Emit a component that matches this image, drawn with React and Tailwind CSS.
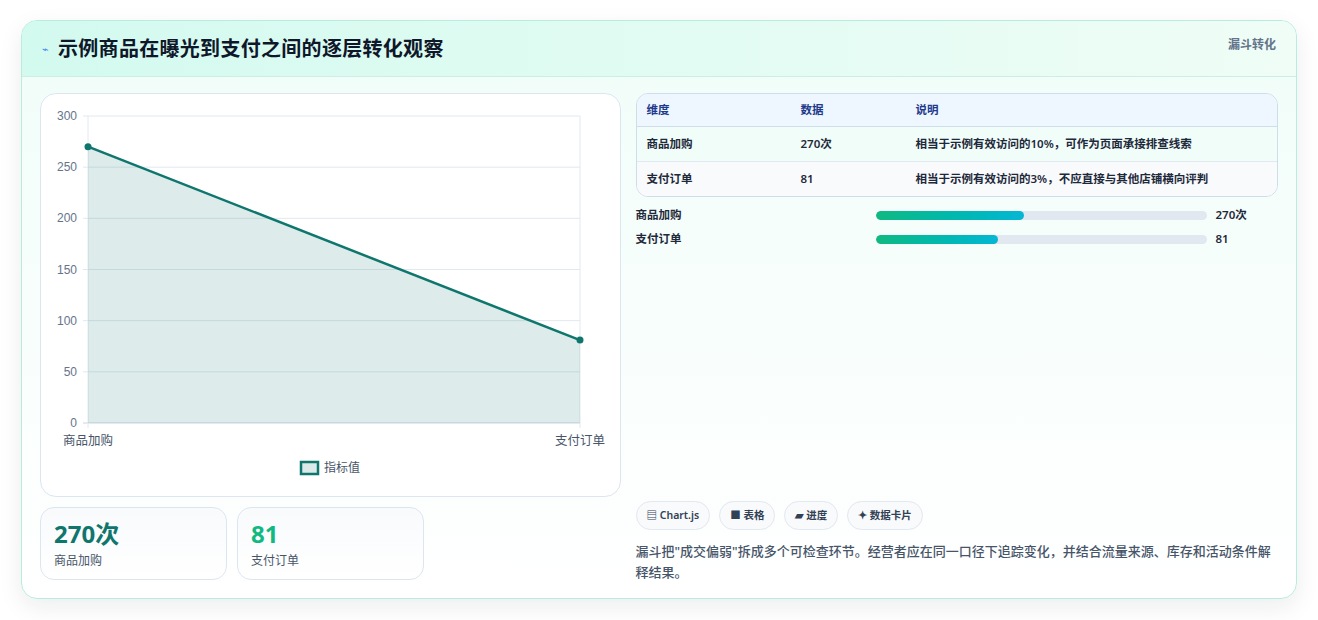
export default function App() {
  const font = { fontFamily: '"Noto Sans", "Noto Sans CJK SC", sans-serif' };
  const ticks = [300, 250, 200, 150, 100, 50, 0];
  const y = (v) => 422 - (v / 300) * 307;
  return (
    <div className="w-[1318px] h-[620px] bg-white pt-[20px] pl-[21px]" style={font}>
      <div className="w-[1276px] h-[579px] rounded-[16px] border border-[#b7ece0] bg-gradient-to-b from-[#f0fdf8] to-white shadow-[0_8px_24px_rgba(15,23,42,0.08)] overflow-hidden flex flex-col">
        <div className="h-[56px] shrink-0 flex items-start justify-between px-[20px] pt-[13px] bg-gradient-to-r from-[#d3faef] to-[#effdf6] border-b border-[#ccefe4]">
          <div className="flex items-center gap-[9px]">
            <span className="text-[#3b82f6] text-[11px]">⌁</span>
            <span className="text-[20px] font-bold text-[#0f172a] tracking-[0.3px]">示例商品在曝光到支付之间的逐层转化观察</span>
          </div>
          <span className="text-[12px] font-bold text-[#64748b] pt-[2px]">漏斗转化</span>
        </div>
        <div className="flex gap-[15px] px-[18px] pt-[16px]">
          <div className="w-[581px] flex flex-col gap-[10px]">
            <div className="h-[404px] rounded-[16px] border border-[#dbe6f0] bg-white relative">
              <svg width="581" height="404" className="absolute left-0 top-0" viewBox="40 93 581 404">
                {ticks.map((t) => (
                  <g key={t}>
                    <line x1="82" x2="579" y1={y(t)} y2={y(t)} stroke={t === 0 ? "#cbd5e1" : "#e2e8f0"} />
                    <text x="76" y={y(t) + 4} textAnchor="end" fontSize="12" fill="#64748b" fontFamily="Liberation Sans, sans-serif">{t}</text>
                  </g>
                ))}
                <line x1="87" x2="87" y1="115" y2="427" stroke="#e2e8f0" />
                <line x1="579" x2="579" y1="115" y2="427" stroke="#e2e8f0" />
                <polygon points={`87,${y(270)} 579,${y(81)} 579,422 87,422`} fill="#0f766e" fillOpacity="0.14" />
                <line x1="87" y1={y(270)} x2="579" y2={y(81)} stroke="#0f766e" strokeWidth="2.5" />
                <circle cx="87" cy={y(270)} r="3.5" fill="#0f766e" />
                <circle cx="579" cy={y(81)} r="3.5" fill="#0f766e" />
                <text x="87" y="444" textAnchor="middle" fontSize="12.5" fill="#475569" style={font}>商品加购</text>
                <text x="579" y="444" textAnchor="middle" fontSize="12.5" fill="#475569" style={font}>支付订单</text>
                <rect x="300" y="461" width="17" height="12" fill="#dbe9e8" stroke="#0f766e" strokeWidth="2.5" />
                <text x="323" y="471" fontSize="12" fill="#475569" style={font}>指标值</text>
              </svg>
            </div>
            <div className="flex gap-[10px]">
              {[["270次", "商品加购", "text-[#0f766e]"], ["81", "支付订单", "text-[#10b981]"]].map(([v, l, c]) => (
                <div key={l} className="w-[187px] h-[73px] rounded-[14px] border border-[#dbe6f0] bg-gradient-to-b from-[#f8fafc] to-white px-[13px] pt-[10px]">
                  <div className={`text-[24px] font-bold leading-[32px] ${c}`}>{v}</div>
                  <div className="text-[12px] text-[#475569] mt-[2px]">{l}</div>
                </div>
              ))}
            </div>
          </div>
          <div className="w-[643px] flex flex-col h-[490px]">
            <div className="rounded-[12px] border border-[#cfdce9] overflow-hidden text-[11.5px] font-semibold text-[#1e293b]">
              <div className="flex h-[33px] items-center bg-[#eef6ff] text-[#1e3a8a] border-b border-[#cfdce9]">
                <span className="w-[164px] pl-[10px]">维度</span><span className="w-[115px]">数据</span><span>说明</span>
              </div>
              <div className="flex h-[35px] items-center bg-[#f0fdf8] border-b border-[#e2e8f0]">
                <span className="w-[164px] pl-[10px]">商品加购</span><span className="w-[115px]">270次</span><span>相当于示例有效访问的10%，可作为页面承接排查线索</span>
              </div>
              <div className="flex h-[34px] items-center bg-[#f8fafc]">
                <span className="w-[164px] pl-[10px]">支付订单</span><span className="w-[115px]">81</span><span>相当于示例有效访问的3%，不应直接与其他店铺横向评判</span>
              </div>
            </div>
            <div className="flex flex-col gap-[10px] mt-[11px] text-[11.5px] font-semibold text-[#1e293b]">
              {[["商品加购", "270次", "45%"], ["支付订单", "81", "37%"]].map(([l, v, w]) => (
                <div key={l} className="flex items-center h-[14px]">
                  <span className="w-[240px]">{l}</span>
                  <div className="w-[331px] h-[9px] rounded-full bg-[#e2e8f0] overflow-hidden">
                    <div className="h-full rounded-full bg-gradient-to-r from-[#10b981] to-[#06b6d4]" style={{ width: w }} />
                  </div>
                  <span className="ml-[9px]">{v}</span>
                </div>
              ))}
            </div>
            <div className="mt-auto">
              <div className="flex gap-[9px] text-[10.5px] font-semibold text-[#334155]">
                {["▤ Chart.js", "■ 表格", "▰ 进度", "✦ 数据卡片"].map((c) => (
                  <span key={c} className="h-[29px] px-[10px] rounded-full border border-[#e2e8f0] bg-[#f8fafc] flex items-center">{c}</span>
                ))}
              </div>
              <p className="mt-[11px] text-[13px] leading-[21px] text-[#475569] font-medium">漏斗把"成交偏弱"拆成多个可检查环节。经营者应在同一口径下追踪变化，并结合流量来源、库存和活动条件解释结果。</p>
            </div>
          </div>
        </div>
      </div>
    </div>
  );
}
